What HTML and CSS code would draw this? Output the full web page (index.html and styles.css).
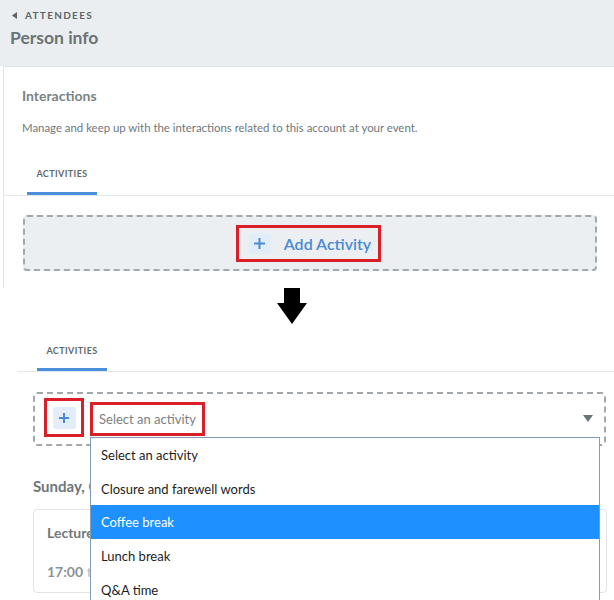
FILE: index.html
```html
<!DOCTYPE html>
<html lang="en">
<head>
<meta charset="utf-8">
<title>Person info</title>
<link rel="stylesheet" href="styles.css">
</head>
<body>
<header class="page-head">
  <a class="crumb"><svg class="crumb-caret" width="5" height="7" viewBox="0 0 5 7"><path d="M5 0V7L0 3.5Z"/></svg>ATTENDEES</a>
  <h1 class="page-title">Person info</h1>
</header>

<section class="card">
  <div class="card-head">
    <h2 class="card-title">Interactions</h2>
    <p class="card-desc">Manage and keep up with the interactions related to this account at your event.</p>
  </div>
  <nav class="tabs tabs-top"><span class="tab">Activities</span></nav>
  <div class="add-zone">
    <div class="add-btn mark">
      <span class="plus-square"><svg width="11" height="11" viewBox="0 0 11 11"><path d="M5.5 0V11M0 5.5H11"/></svg></span>
      <span class="add-label">Add Activity</span>
    </div>
  </div>
</section>

<div class="arrow-row">
  <svg width="30" height="36" viewBox="0 0 30 36"><path d="M7 0H23V15H30L15 36L0 15H7Z"/></svg>
</div>

<section class="panel">
  <nav class="tabs tabs-bottom"><span class="tab">Activities</span></nav>
  <div class="select-zone">
    <div class="plus-mark mark">
      <span class="plus-square small"><svg width="10" height="10" viewBox="0 0 10 10"><path d="M5 0V10M0 5H10"/></svg></span>
    </div>
    <div class="select-field">
      <span class="select-value mark">Select an activity</span>
      <svg class="select-caret" width="10" height="7" viewBox="0 0 10 7"><path d="M0 0H10L5 7Z"/></svg>
      <ul class="select-list">
        <li class="option">Select an activity</li>
        <li class="option">Closure and farewell words</li>
        <li class="option option-active">Coffee break</li>
        <li class="option">Lunch break</li>
        <li class="option">Q&amp;A time</li>
      </ul>
    </div>
  </div>
  <div class="behind">
    <h3 class="day-title">Sunday, October 6th</h3>
    <div class="session">
      <div class="session-name">Lecture</div>
      <div class="session-time"><b>17:00</b> <span class="to">to</span></div>
    </div>
  </div>
</section>
</body>
</html>
```

FILE: styles.css
```css
html {
  overflow: hidden;
}
* {
  box-sizing: border-box;
}
body {
  margin: 0;
  width: 614px;
  height: 600px;
  overflow: hidden;
  background: #ffffff;
  font-family: Lato, "Open Sans", sans-serif;
  color: #6c7478;
}

/* page header */
.page-head {
  height: 66px;
  background: #ebeef0;
  padding: 9px 0 0 10px;
}
.crumb {
  display: flex;
  align-items: center;
  height: 12px;
  font-size: 10px;
  font-weight: 700;
  letter-spacing: 1.3px;
  color: #5c6569;
}
.crumb-caret {
  fill: #5c6569;
  margin: 0 8px 0 2px;
}
.page-title {
  margin: 6px 0 0;
  font-size: 17.5px;
  line-height: 22px;
  font-weight: 700;
  color: #6b7377;
}

/* card */
.card {
  height: 222px;
  margin-left: 3px;
  background: #fff;
  border-top: 1px solid #dde1e3;
  border-left: 1px solid #e3e6e8;
}
.card-head {
  padding: 20px 18px 0;
}
.card-title {
  margin: 0;
  font-size: 14px;
  line-height: 17px;
  font-weight: 700;
  color: #7a8286;
}
.card-desc {
  margin: 17px 0 0;
  font-size: 11.4px;
  line-height: 14px;
  color: #6f787c;
}

.tabs {
  display: flex;
  border-bottom: 1px solid #e4e7e9;
}
.tab {
  display: block;
  width: 70px;
  text-align: center;
  font-size: 9px;
  line-height: 11px;
  font-weight: 700;
  letter-spacing: 0.4px;
  text-transform: uppercase;
  color: #5f686c;
  border-bottom: 3px solid #4a8fdc;
}
.tabs-top {
  margin-top: 22px;
}
.tabs-top .tab {
  margin-left: 23px;
  padding: 11px 0 13px;
}

.add-zone {
  margin: 19px 17px 0 19px;
  height: 56px;
  background: #eceff1;
  border: 2px dashed #a2a8ac;
  border-radius: 4px;
  display: flex;
  justify-content: center;
  align-items: center;
}
.mark {
  border: 3px solid #d91f28;
}
.add-btn {
  display: flex;
  align-items: center;
  height: 37px;
  margin-left: -3px;
  padding: 0 7px 0 10px;
}
.plus-square {
  display: flex;
  align-items: center;
  justify-content: center;
  width: 22px;
  height: 21px;
  background: #e2edf9;
  border-radius: 2px;
}
.plus-square svg {
  stroke: #4a8ad4;
  stroke-width: 2;
}
.add-label {
  margin-left: 13px;
  font-size: 16px;
  font-weight: 600;
  color: #4a8ad4;
}

/* arrow */
.arrow-row {
  height: 42px;
  padding-left: 277px;
}
.arrow-row svg {
  display: block;
  fill: #000;
}

/* bottom panel */
.panel {
  margin-left: 17px;
}
.tabs-bottom .tab {
  margin-left: 20px;
  padding: 15px 0 12px;
}
.select-zone {
  position: relative;
  display: flex;
  align-items: flex-start;
  margin: 20px 8px 0 16px;
  height: 54px;
  padding: 4px 4px 0 9px;
  border: 2px dashed #a2a8ac;
  border-radius: 4px;
}
.plus-mark {
  display: flex;
  align-items: center;
  justify-content: center;
  width: 40px;
  height: 39px;
}
.plus-square.small {
  width: 23px;
  height: 22px;
  border-radius: 3px;
}
.select-field {
  position: relative;
  flex: 1;
  display: flex;
  align-items: flex-start;
  justify-content: space-between;
  height: 35px;
  margin: 4px 0 0 6px;
}
.select-value {
  display: flex;
  align-items: center;
  width: 115px;
  height: 34px;
  padding: 0 0 0 6px;
  font-size: 13px;
  color: #7b7f82;
}
.select-caret {
  fill: #6b7377;
  margin: 13px 7px 0 0;
}
.select-list {
  position: absolute;
  top: 100%;
  left: 0;
  right: 0;
  z-index: 2;
  margin: 0;
  padding: 0;
  list-style: none;
  background: #fff;
  border: 1px solid #7f9db9;
}
.option {
  height: 33.6px;
  display: flex;
  align-items: center;
  padding: 1px 0 0 10px;
  font-size: 13px;
  color: #1d1d1d;
}
.option-active {
  background: #1e90ff;
  color: #fff;
}

.day-title {
  margin: 31px 0 0 16px;
  font-size: 15px;
  line-height: 18px;
  font-weight: 700;
  color: #6d767a;
}
.session {
  margin: 14px 7px 0 16px;
  height: 84px;
  padding: 14px 13px 0;
  border: 1px solid #e1e4e6;
  border-radius: 4px;
}
.session-name {
  font-size: 14px;
  line-height: 17px;
  font-weight: 700;
  color: #6f777b;
}
.session-time {
  margin-top: 22px;
  font-size: 14px;
  line-height: 17px;
  color: #8c9397;
}
.session-time .to {
  color: #b4b9bc;
}
```
